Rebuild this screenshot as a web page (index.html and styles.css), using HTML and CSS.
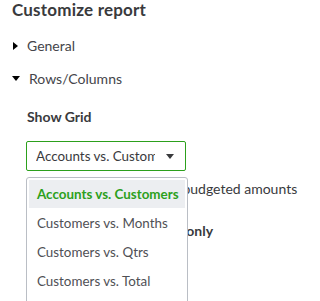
FILE: index.html
```html
<!DOCTYPE html>
<html lang="en">
<head>
    <meta charset="UTF-8">
    <title>Customize report</title>
    <link rel="stylesheet" href="styles.css">
</head>
<body>
    <div class="painel">
        <h1 class="titulo">Customize report</h1>

        <div class="secao">
            <span class="seta seta-direita"></span>
            <span>General</span>
        </div>

        <div class="secao">
            <span class="seta seta-baixo"></span>
            <span>Rows/Columns</span>
        </div>

        <div class="conteudo">
            <div class="rotulo">Show Grid</div>

            <div class="campo">
                <div class="select">
                    <span class="valor">Accounts vs. Customers</span>
                    <span class="caret"></span>
                </div>

                <ul class="lista">
                    <li class="ativo">Accounts vs. Customers</li>
                    <li>Customers vs. Months</li>
                    <li>Customers vs. Qtrs</li>
                    <li>Customers vs. Total</li>
                    <li>Customers vs. Years</li>
                </ul>
            </div>

            <div class="opcao">Show budgeted amounts</div>
            <div class="opcao forte">Show non-zero or active only</div>
        </div>
    </div>
</body>
</html>
```

FILE: styles.css
```css
body {
    margin: 0;
    background-color: #fff;
    color: #393a3d;
    font-family: Lato, "Open Sans", sans-serif;
}

.painel {
    height: 301px;
    overflow: hidden;
    box-sizing: border-box;
    padding: 0 12px 0 12px;
}

.titulo {
    margin: 0 0 9px 0;
    font-size: 17px;
    font-weight: 700;
    line-height: 20px;
    letter-spacing: 0.2px;
}

.secao {
    display: flex;
    align-items: center;
    gap: 9px;
    height: 33px;
    font-size: 14px;
    color: #44454a;
}

.seta {
    display: block;
    width: 0;
    height: 0;
}

.seta-direita {
    margin-left: 1px;
    border-top: 4px solid transparent;
    border-bottom: 4px solid transparent;
    border-left: 5px solid #000;
}

.seta-baixo {
    border-left: 4px solid transparent;
    border-right: 4px solid transparent;
    border-top: 5px solid #000;
}

.conteudo {
    padding: 12px 0 0 14px;
}

.rotulo {
    padding-left: 1px;
    font-size: 14px;
    font-weight: 700;
    line-height: 20px;
    margin-bottom: 14px;
}

.campo {
    position: relative;
    width: 160px;
}

.select {
    display: flex;
    align-items: center;
    height: 30px;
    border: 1px solid #2ca01c;
    border-radius: 2px;
    padding: 0 0 0 9px;
    font-size: 13.4px;
    box-sizing: border-box;
}

.valor {
    width: 119px;
    overflow: hidden;
    white-space: nowrap;
}

.caret {
    margin-left: 11px;
    width: 0;
    height: 0;
    border-left: 4px solid transparent;
    border-right: 4px solid transparent;
    border-top: 5px solid #393a3d;
}

.lista {
    position: absolute;
    top: 36px;
    left: 0;
    width: 162px;
    margin: 0;
    padding: 2px;
    list-style: none;
    background-color: #fff;
    border: 1px solid #babec5;
    border-radius: 3px;
    box-sizing: border-box;
    font-size: 13.4px;
    color: #4f5055;
}

.lista li {
    height: 29px;
    line-height: 29px;
    padding-left: 8px;
}

.lista li.ativo {
    height: 28px;
    line-height: 28px;
    margin-bottom: 1px;
    background-color: #eceef1;
    color: #2ca01c;
    font-weight: 700;
}

.opcao {
    font-size: 14px;
    line-height: 20px;
    margin-top: 8px;
    padding-left: 119px;
    white-space: nowrap;
}

.opcao.forte {
    font-weight: 700;
    margin-top: 22px;
    padding-left: 6px;
}
```
